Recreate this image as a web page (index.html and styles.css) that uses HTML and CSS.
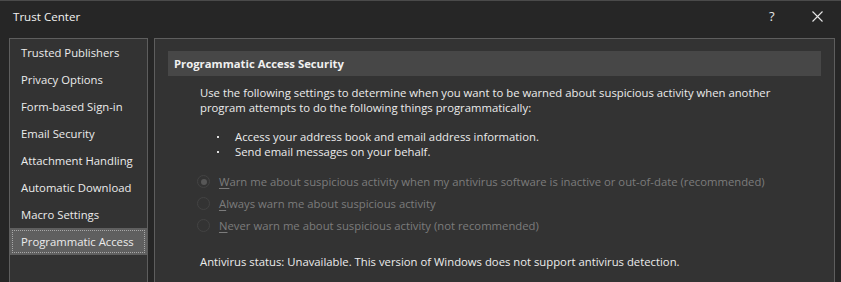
FILE: index.html
```html
<!DOCTYPE html>
<html>
<head>
<meta charset="utf-8">
<link rel="stylesheet" href="styles.css">
</head>
<body>
<div class="window">
  <div class="titlebar">
    <span class="title">Trust Center</span>
    <span class="help">?</span>
    <span class="close">
      <svg width="11" height="11" viewBox="0 0 11 11"><path d="M0.5 0.5 L10.5 10.5 M10.5 0.5 L0.5 10.5" stroke="#e6e6e6" stroke-width="1.1" fill="none"/></svg>
    </span>
  </div>
  <div class="content">
    <div class="nav">
      <div class="nav-item">Trusted Publishers</div>
      <div class="nav-item">Privacy Options</div>
      <div class="nav-item">Form-based Sign-in</div>
      <div class="nav-item">Email Security</div>
      <div class="nav-item">Attachment Handling</div>
      <div class="nav-item">Automatic Download</div>
      <div class="nav-item">Macro Settings</div>
      <div class="nav-item selected"><span class="focus">Programmatic Access</span></div>
    </div>
    <div class="panel">
      <div class="section-header">Programmatic Access Security</div>
      <div class="body">
        <p class="intro">Use the following settings to determine when you want to be warned about suspicious activity when another program attempts to do the following things programmatically:</p>
        <ul class="bullets">
          <li>Access your address book and email address information.</li>
          <li>Send email messages on your behalf.</li>
        </ul>
        <div class="radios">
          <div class="radio"><span class="circle checked"></span><span class="label"><u>W</u>arn me about suspicious activity when my antivirus software is inactive or out-of-date (recommended)</span></div>
          <div class="radio"><span class="circle"></span><span class="label"><u>A</u>lways warn me about suspicious activity</span></div>
          <div class="radio"><span class="circle"></span><span class="label"><u>N</u>ever warn me about suspicious activity (not recommended)</span></div>
        </div>
        <p class="status">Antivirus status: Unavailable. This version of Windows does not support antivirus detection.</p>
      </div>
    </div>
  </div>
</div>
</body>
</html>
```

FILE: styles.css
```css
html, body {
  margin: 0;
  padding: 0;
  background: #262626;
}
body {
  width: 841px;
  height: 282px;
  overflow: hidden;
  font-family: "Open Sans", "Noto Sans", sans-serif;
  font-size: 11.3px;
  color: #ececec;
}
.window {
  width: 841px;
  height: 282px;
  background: #262626;
  border-top: 1px solid #4a4a4a;
  box-sizing: border-box;
}
.titlebar {
  height: 37px;
  display: flex;
  align-items: center;
  padding-left: 13px;
  padding-bottom: 6px;
  box-sizing: border-box;
  font-size: 11.6px;
  color: #f2f2f2;
}
.title {
  flex: 1;
}
.help {
  width: 10px;
  margin-right: 33px;
  font-size: 13px;
  color: #e6e6e6;
  padding-bottom: 2px;
}
.close {
  width: 11px;
  height: 11px;
  margin-right: 18px;
  display: flex;
}
.content {
  display: flex;
  gap: 6px;
  padding-left: 9px;
}
.nav {
  width: 139px;
  height: 244px;
  box-sizing: border-box;
  border: 1px solid #5e5e5e;
  border-bottom: none;
  background: #333333;
}
.nav-item {
  height: 27px;
  display: flex;
  align-items: center;
  padding-left: 11px;
  box-sizing: border-box;
  white-space: nowrap;
}
.nav-item.selected {
  background: #5f5f5f;
  padding: 2px;
}
.focus {
  flex: 1;
  height: 100%;
  box-sizing: border-box;
  border: 1px dotted #a8a8a8;
  display: flex;
  align-items: center;
  padding-left: 8px;
}
.panel {
  width: 681px;
  height: 244px;
  box-sizing: border-box;
  border: 1px solid #5e5e5e;
  border-bottom: none;
  background: #333333;
  padding: 12px 13px 0 13px;
}
.section-header {
  height: 25px;
  background: #474747;
  display: flex;
  align-items: center;
  padding-left: 6px;
  font-weight: bold;
  color: #f0f0f0;
}
.body {
  padding-left: 32px;
}
.intro {
  margin: 9px 0 0 0;
  line-height: 15px;
  width: 600px;
}
.bullets {
  margin: 14px 0 0 0;
  padding: 0 0 0 35px;
  line-height: 15px;
  list-style: none;
}
.bullets li {
  position: relative;
}
.bullets li::before {
  content: "";
  position: absolute;
  left: -18px;
  top: 7px;
  width: 2px;
  height: 2px;
  background: #e0e0e0;
}
.radios {
  margin-top: 15px;
  display: flex;
  flex-direction: column;
  gap: 7px;
  color: #7c7c7c;
}
.radio {
  height: 15px;
  display: flex;
  align-items: center;
  margin-left: -3px;
}
.circle {
  width: 13px;
  height: 13px;
  box-sizing: border-box;
  border: 1px solid #434343;
  border-radius: 50%;
  margin-right: 9px;
  display: flex;
  align-items: center;
  justify-content: center;
}
.circle.checked::after {
  content: "";
  width: 6px;
  height: 6px;
  border-radius: 50%;
  background: #575757;
}
.label u {
  text-decoration-thickness: 1px;
  text-underline-offset: 2px;
}
.status {
  margin: 21px 0 0 0;
  line-height: 15px;
}
```
